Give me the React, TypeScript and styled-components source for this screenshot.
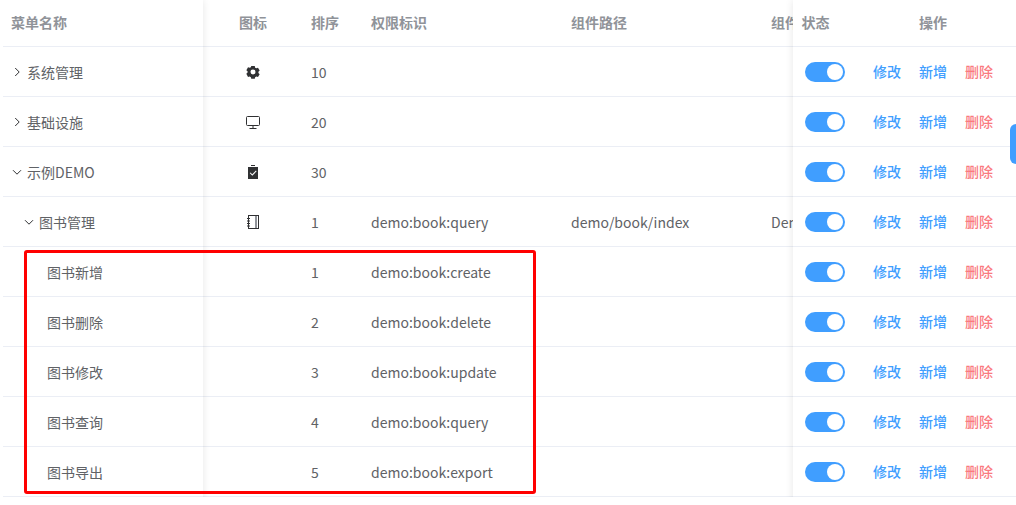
import styled, { createGlobalStyle } from 'styled-components';

const GlobalStyle = createGlobalStyle`
  html, body {
    margin: 0;
    padding: 0;
    background: #fff;
    font-family: "Noto Sans CJK SC", "Noto Sans", sans-serif;
    font-size: 14px;
    color: #606266;
    overflow: hidden;
  }
`;

const Page = styled.div`
  position: relative;
  width: 1016px;
  height: 505px;
  overflow: hidden;
  padding-left: 3px;
  box-sizing: border-box;
  display: flex;
`;

const LeftPane = styled.div`
  flex: 0 0 200px;
  background: #fff;
  box-shadow: 0 0 8px rgba(0, 0, 0, 0.1);
  clip-path: inset(0 -10px 8px 0);
  z-index: 1;
`;

const MiddlePane = styled.div`
  flex: 1;
  min-width: 0;
  overflow: hidden;
`;

const RightPane = styled.div`
  flex: 0 0 223px;
  background: #fff;
  box-shadow: 0 0 8px rgba(0, 0, 0, 0.1);
  clip-path: inset(0 0 8px -10px);
  z-index: 1;
`;

const Row = styled.div<{ $head?: boolean }>`
  display: flex;
  align-items: center;
  box-sizing: border-box;
  height: ${(p) => (p.$head ? 47 : 50)}px;
  padding-bottom: ${(p) => (p.$head ? 3 : 0)}px;
  border-bottom: 1px solid #ebeef5;
  color: ${(p) => (p.$head ? '#909399' : '#606266')};
  font-weight: ${(p) => (p.$head ? 700 : 400)};
  white-space: nowrap;
`;

const MiddleRow = styled(Row)`
  width: 620px;
`;

const Cell = styled.div<{ $w: number; $center?: boolean }>`
  flex: 0 0 ${(p) => p.$w}px;
  box-sizing: border-box;
  padding: 0 8px;
  display: flex;
  align-items: center;
  justify-content: ${(p) => (p.$center ? 'center' : 'flex-start')};
`;

const StatusHead = styled(Cell)`
  padding-left: 8.5px;
`;

const ActionsHead = styled.div`
  padding-left: 66px;
`;

const NameCell = styled.div<{ $level: number }>`
  display: flex;
  align-items: center;
  padding-left: ${(p) => 8 + p.$level * 12}px;
`;

const Arrow = styled.svg`
  flex: none;
  display: block;
  width: 12px;
  height: 12px;
  margin-right: 4px;
  color: #303133;
`;

const ArrowSpacer = styled.span`
  flex: none;
  width: 12px;
`;

const IconBox = styled.svg`
  display: block;
  width: 16px;
  height: 16px;
  color: #303133;
`;

const SwitchCell = styled.div`
  flex: 0 0 60px;
  padding-left: 12px;
  box-sizing: border-box;
`;

const Switch = styled.span`
  display: block;
  position: relative;
  width: 40px;
  height: 20px;
  border-radius: 10px;
  background: #409eff;
  &::after {
    content: '';
    position: absolute;
    top: 2px;
    right: 2px;
    width: 16px;
    height: 16px;
    border-radius: 50%;
    background: #fff;
  }
`;

const Actions = styled.div`
  flex: 1;
  display: flex;
  gap: 18px;
  padding: 0 0 2px 20px;
`;

const ActionLink = styled.span<{ $danger?: boolean }>`
  font-weight: 500;
  color: ${(p) => (p.$danger ? '#fa7a80' : '#409eff')};
`;

const SideTab = styled.div`
  position: absolute;
  right: 0;
  top: 124px;
  width: 6px;
  height: 40px;
  border-radius: 6px 0 0 6px;
  background: #409eff;
  z-index: 2;
`;

const Highlight = styled.div`
  position: absolute;
  left: 24px;
  top: 250px;
  width: 512px;
  height: 244px;
  box-sizing: border-box;
  border: 3px solid #f00;
  border-radius: 3px;
  z-index: 3;
`;

const ArrowRight = () => (
  <Arrow viewBox="0 0 12 12">
    <path d="M4.2 2 8.2 6l-4 4" fill="none" stroke="currentColor" strokeWidth="1" />
  </Arrow>
);

const ArrowDown = () => (
  <Arrow viewBox="0 0 12 12">
    <path d="M2 4.2 6 8.2l4-4" fill="none" stroke="currentColor" strokeWidth="1" />
  </Arrow>
);

const GearIcon = () => (
  <IconBox viewBox="-1 -1 18 18">
    <path
      fill="currentColor"
      fillRule="evenodd"
      d="M6 1.2h4l.4 1.9 1.3.7 1.9-.6 1.9 3.2-1.4 1.3v1.5l1.4 1.3-1.9 3.2-1.9-.6-1.3.7-.4 1.9H6l-.4-1.9-1.3-.7-1.9.6L.5 10l1.4-1.3V7.2L.5 5.9l1.9-3.2 1.9.6 1.3-.7zM8 5.2a2.8 2.8 0 1 0 0 5.6 2.8 2.8 0 0 0 0-5.6z"
    />
  </IconBox>
);

const MonitorIcon = () => (
  <IconBox viewBox="0 0 16 16">
    <g fill="none" stroke="currentColor" strokeWidth="1">
      <rect x="1.5" y="2.5" width="13" height="9" rx="1" />
      <path d="M8 11.5v3M4.5 14.5h7" />
    </g>
  </IconBox>
);

const ClaimIcon = () => (
  <IconBox viewBox="0 0 16 16">
    <path
      fill="currentColor"
      fillRule="evenodd"
      d="M6 1h4v1H6zM3 3h10v12H3zM10.9 6.6 7.3 10.2 5.4 8.4l-.7.7 2.6 2.6 4.3-4.4z"
    />
  </IconBox>
);

const NotebookIcon = () => (
  <IconBox viewBox="0 0 16 16">
    <g fill="none" stroke="currentColor" strokeWidth="1">
      <rect x="3.5" y="1.5" width="10" height="13" />
      <path d="M2 4.5h3M2 7h3M2 9.5h3M2 12h3" />
    </g>
    <rect x="10" y="2" width="2" height="12" fill="#909399" />
  </IconBox>
);

type MenuRow = {
  name: string;
  level: number;
  arrow?: 'open' | 'closed';
  icon?: () => React.JSX.Element;
  order: number;
  perm?: string;
  path?: string;
  comp?: string;
};

const rows: MenuRow[] = [
  { name: '系统管理', level: 0, arrow: 'closed', icon: GearIcon, order: 10 },
  { name: '基础设施', level: 0, arrow: 'closed', icon: MonitorIcon, order: 20 },
  { name: '示例DEMO', level: 0, arrow: 'open', icon: ClaimIcon, order: 30 },
  {
    name: '图书管理',
    level: 1,
    arrow: 'open',
    icon: NotebookIcon,
    order: 1,
    perm: 'demo:book:query',
    path: 'demo/book/index',
    comp: 'DemoBook',
  },
  { name: '图书新增', level: 2, order: 1, perm: 'demo:book:create' },
  { name: '图书删除', level: 2, order: 2, perm: 'demo:book:delete' },
  { name: '图书修改', level: 2, order: 3, perm: 'demo:book:update' },
  { name: '图书查询', level: 2, order: 4, perm: 'demo:book:query' },
  { name: '图书导出', level: 2, order: 5, perm: 'demo:book:export' },
];

export default function App() {
  return (
    <Page>
      <GlobalStyle />
      <LeftPane>
        <Row $head>
          <Cell $w={200}>菜单名称</Cell>
        </Row>
        {rows.map((r) => (
          <Row key={r.name}>
            <NameCell $level={r.level}>
              {r.arrow === 'open' && <ArrowDown />}
              {r.arrow === 'closed' && <ArrowRight />}
              {!r.arrow && <ArrowSpacer />}
              {r.name}
            </NameCell>
          </Row>
        ))}
      </LeftPane>
      <MiddlePane>
        <MiddleRow $head>
          <Cell $w={100} $center>图标</Cell>
          <Cell $w={60}>排序</Cell>
          <Cell $w={200}>权限标识</Cell>
          <Cell $w={200}>组件路径</Cell>
          <Cell $w={60}>组件名称</Cell>
        </MiddleRow>
        {rows.map((r) => (
          <MiddleRow key={r.name}>
            <Cell $w={100} $center>{r.icon && <r.icon />}</Cell>
            <Cell $w={60}>{r.order}</Cell>
            <Cell $w={200}>{r.perm}</Cell>
            <Cell $w={200}>{r.path}</Cell>
            <Cell $w={60}>{r.comp}</Cell>
          </MiddleRow>
        ))}
      </MiddlePane>
      <RightPane>
        <Row $head>
          <StatusHead $w={60}>状态</StatusHead>
          <ActionsHead>操作</ActionsHead>
        </Row>
        {rows.map((r) => (
          <Row key={r.name}>
            <SwitchCell>
              <Switch />
            </SwitchCell>
            <Actions>
              <ActionLink>修改</ActionLink>
              <ActionLink>新增</ActionLink>
              <ActionLink $danger>删除</ActionLink>
            </Actions>
          </Row>
        ))}
      </RightPane>
      <SideTab />
      <Highlight />
    </Page>
  );
}
